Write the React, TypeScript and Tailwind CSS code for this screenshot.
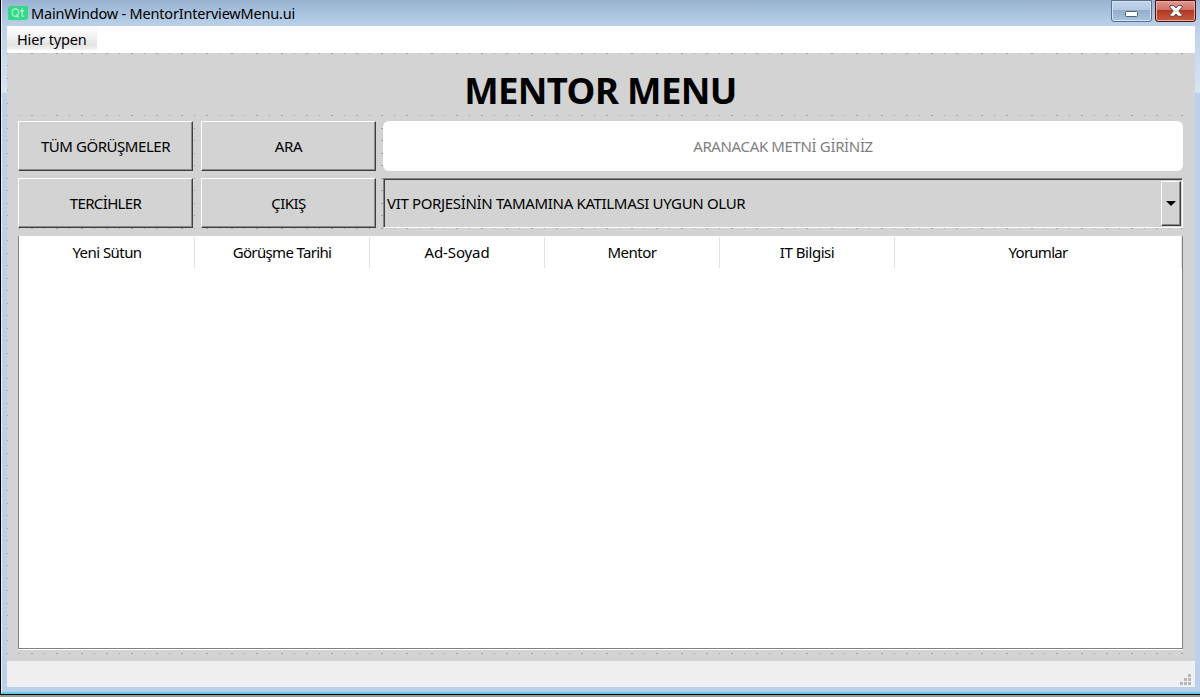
import type { ReactNode } from 'react';

const columns = [
  { label: 'Yeni Sütun', cls: 'w-[176px] pl-px tracking-[-0.55px]' },
  { label: 'Görüşme Tarihi', cls: 'w-[175px] tracking-[-0.65px]' },
  { label: 'Ad-Soyad', cls: 'w-[175px] tracking-[-0.12px]' },
  { label: 'Mentor', cls: 'w-[175px] tracking-[-0.5px]' },
  { label: 'IT Bilgisi', cls: 'w-[175px] tracking-[-0.45px]' },
  { label: 'Yorumlar', cls: 'w-[287px] tracking-[-0.75px]' },
];

function GridDots() {
  return (
    <svg className="absolute left-0 top-0" width="1180" height="608" aria-hidden="true" shapeRendering="crispEdges">
      <defs>
        <pattern id="dots" width="25" height="25" patternUnits="userSpaceOnUse">
          <path d="M0 0h1v1h-1zM24 0h1v1h-1zM12 0h1v1h-1zM0 12h1v1h-1zM24 12h1v1h-1zM12 12h1v1h-1z" fill="#a0a0a0" />
        </pattern>
      </defs>
      <rect width="1180" height="608" fill="url(#dots)" />
    </svg>
  );
}

function PushButton({ children, className }: { children: ReactNode; className: string }) {
  return (
    <button
      className={`flex h-[50px] w-[175px] items-center justify-center border border-b-[#404040] border-l-white border-r-[#404040] border-t-white bg-[#d3d3d3] pt-px text-[15px] shadow-[inset_-1px_-1px_0_#8c8c8c] ${className}`}
    >
      {children}
    </button>
  );
}

function TitleBar() {
  return (
    <header className="flex h-[26px] items-start bg-gradient-to-b from-[#98b4d2] to-[#bbd1e9] pl-[6px] pr-[4px]">
      <svg className="mt-[6px] shrink-0" width="20" height="14" viewBox="0 0 20 14" aria-hidden="true">
        <path d="M2 0H20V12L18 14H0V2Z" fill="#2fdb85" />
        <g fill="none" stroke="#a9e9cb" strokeWidth="1.5">
          <ellipse cx="7.4" cy="6.6" rx="3.2" ry="3.9" />
          <path d="M8 8.5L10.6 11.8M14 2.5V9.2Q14 10.8 16.3 10.2M12 5H16.3" />
        </g>
      </svg>
      <h1 className="ml-[3px] flex-1 whitespace-nowrap pt-[3px] text-[14.5px] leading-[20px] tracking-[-0.2px]">
        MainWindow - MentorInterviewMenu.ui
      </h1>
      <div className="flex gap-[3px]">
        <button aria-label="Minimize" className="flex h-[22px] w-[41px] items-center justify-center rounded-b-[3px] border border-[#586f8f] bg-[linear-gradient(#c1d3e8_0%,#b5cae3_43%,#92adca_45%,#a9c3df_100%)] shadow-[inset_0_0_0_1px_#d4e2f1]">
          <svg width="13" height="6" className="mt-[5px]">
            <rect x="0.5" y="0.5" width="12" height="5" rx="1" fill="#fff" stroke="#535f70" />
          </svg>
        </button>
        <button aria-label="Close" className="flex h-[22px] w-[41px] items-center justify-center rounded-b-[3px] border border-[#551015] bg-[linear-gradient(#df9b91_0%,#cf7165_43%,#b33721_45%,#c65b3f_100%)] shadow-[inset_0_0_0_1px_#e5aaa0]">
          <svg width="14" height="12" viewBox="0 0 14 12">
            <path d="M1 .7H4.8L7 3L9.2 .7H13V2.3L9.7 6L13 9.7V11.3H9.2L7 9L4.8 11.3H1V9.7L4.3 6L1 2.3Z" fill="#fff" stroke="#65434a" strokeLinejoin="round" />
          </svg>
        </button>
      </div>
    </header>
  );
}

export default function App() {
  return (
    <div className="flex h-[697px] w-[1200px] flex-col overflow-hidden bg-[#9b9b9b] font-['Noto_Sans','Open_Sans',sans-serif] text-black">
      <div className="flex h-[695px] flex-col border-b border-l border-black">
        <div className="flex h-[694px] flex-col border-b-2 border-l border-b-[#62cbea] border-l-[#e4eef8] bg-[linear-gradient(#bbd1e9_0px,#bbd1e9_26px,#d8e5f3_92px,#b9d1ea_94px)]">
          <TitleBar />
          <div className="ml-[5px] flex w-[1188px] flex-1 flex-col">
            <nav className="flex h-[27px] bg-white">
              <div className="h-[24px] w-[90px] whitespace-nowrap bg-[linear-gradient(#fff,#f0f0f0_50%,#e3e3e3_78%,#f5f5f5)] pl-[10px] text-[14.5px] leading-[26px] tracking-[-0.15px]">
                Hier typen
              </div>
            </nav>
            <main className="relative flex h-[608px] flex-col bg-[#d3d3d3] pl-[11px] pt-[9px]">
              <GridDots />
              <div className="relative flex w-[1165px] flex-col">
                <h2 className="h-[52px] bg-[#d3d3d3] text-center text-[36.5px] font-bold leading-[57px] tracking-[-0.6px]">MENTOR MENU</h2>
                <div className="mt-[7px] flex gap-[8px]">
                  <PushButton className="tracking-[-0.45px]">TÜM GÖRÜŞMELER</PushButton>
                  <PushButton className="tracking-[-0.35px]">ARA</PushButton>
                  <input
                    className="-ml-px h-[50px] w-[800px] rounded-[6px] bg-white text-center text-[15px] tracking-[-0.36px] outline-none placeholder:text-[#808080]"
                    placeholder="ARANACAK METNİ GİRİNİZ"
                  />
                </div>
                <div className="mt-[7px] flex gap-[8px]">
                  <PushButton className="tracking-[-0.65px]">TERCİHLER</PushButton>
                  <PushButton className="tracking-[-0.5px]">ÇIKIŞ</PushButton>
                  <div className="-ml-px flex h-[50px] w-[800px] items-center border border-b-white border-l-[#858585] border-r-white border-t-[#858585] bg-[#d3d3d3] pr-px shadow-[inset_1px_1px_0_#404040]">
                    <span className="flex-1 whitespace-nowrap pl-[3px] pt-px text-[15px] tracking-[-0.34px]">VIT PORJESİNİN TAMAMINA KATILMASI UYGUN OLUR</span>
                    <div className="flex h-[45px] w-[20px] items-center justify-center border border-b-[#404040] border-l-white border-r-[#404040] border-t-white shadow-[inset_-1px_-1px_0_#858585]">
                      <svg width="10" height="5" aria-hidden="true"><path d="M0 0H10L5 5Z" /></svg>
                    </div>
                  </div>
                </div>
                <section className="mt-[8px] h-[414px] border-b border-b-white">
                  <div className="h-[413px] border-b border-l border-r border-[#808080] bg-white">
                    <div className="flex h-[32px]">
                      {columns.map((column) => (
                        <div key={column.label} className={`mt-px h-[31px] shrink-0 border-r border-[#e2e2e2] text-center text-[15px] leading-[31px] ${column.cls}`}>
                          {column.label}
                        </div>
                      ))}
                    </div>
                  </div>
                </section>
              </div>
            </main>
            <footer className="flex h-[26px] items-end justify-end bg-[#f0f0f0] pb-[2px] pr-[4px]">
              <svg width="11" height="11" aria-hidden="true">
                <path d="M8 0h3v3h-3zM4 4h3v3h-3zM8 4h3v3h-3zM0 8h3v3h-3zM4 8h3v3h-3zM8 8h3v3h-3z" fill="#b8b8b8" />
              </svg>
            </footer>
          </div>
        </div>
      </div>
    </div>
  );
}
